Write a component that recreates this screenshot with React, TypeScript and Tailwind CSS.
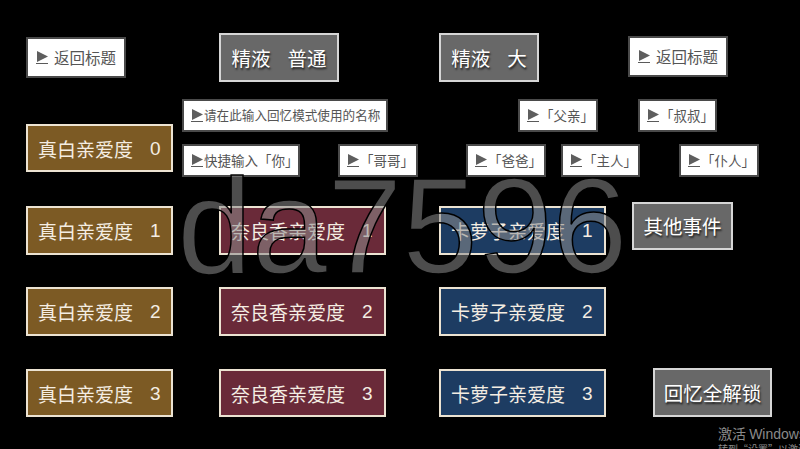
import React from 'react'

const cjk = "font-['Microsoft_YaHei','Noto_Sans_CJK_SC',sans-serif]"

function Tri()
{
  return (
    <span className="inline-flex items-end border-b-[1.5px] border-[#5a5a5a] pb-[1px] mr-[1px] shrink-0">
      <svg width="12" height="11" viewBox="0 0 12 11">
        <path d="M1 0 L12 5.5 L1 11 Z" fill="#5e5e5e" />
      </svg>
    </span>
  )
}

function LinkBtn({ label, w, big = false, gap = 0, size, cls = '' }: { label: string; w: number; big?: boolean; gap?: number; size?: number; cls?: string })
{
  return (
    <div
      className={`${cls} flex items-center whitespace-nowrap bg-white border-2 border-[#4a4a4a] text-[#555] leading-none ${big ? 'h-[41px] pl-[8px] text-[15.5px]' : 'h-[33px] pl-[7px] text-[13.5px]'}`}
      style={{ width: w }}
    >
      <Tri />
      <span style={{ marginLeft: gap, fontSize: size }}>{label}</span>
    </div>
  )
}

function LoveBtn({ label, n, w, color, cls = '' }: { label: string; n: number; w: number; color: string; cls?: string })
{
  return (
    <div
      className={`${cls} ${color} h-[49px] flex items-center gap-[17px] pl-[10px] border-2 border-[#ece3d2] text-[19px] text-[#f4ede2] leading-none`}
      style={{ width: w }}
    >
      <span>{label}</span>
      <span className="font-['Liberation_Sans',sans-serif] text-[19px]">{n}</span>
    </div>
  )
}

function GrayBtn({ children, w, h = 49, cls = '' }: { children: React.ReactNode; w: number; h?: number; cls?: string })
{
  return (
    <div
      className={`${cls} flex items-center justify-center bg-[#686868] border-2 border-[#d6d6d6] text-white text-[19.5px] leading-none [text-shadow:1px_2px_2px_rgba(0,0,0,0.7)]`}
      style={{ width: w, height: h }}
    >
      {children}
    </div>
  )
}

const brown = 'bg-[#7c5a24]'
const wine = 'bg-[#6a2a39]'
const navy = 'bg-[#1d3c62]'

export default function App()
{
  return (
    <main className={`${cjk} relative w-[800px] h-[449px] overflow-hidden bg-black`}>

      <div className="flex items-start pt-[33px]">
        <LinkBtn big label="返回标题" w={100} gap={5} cls="ml-[26px] mt-[4px]" />
        <GrayBtn w={120} cls="ml-[93px]">
          <span>精液</span>
          <span className="ml-[17px]">普通</span>
        </GrayBtn>
        <GrayBtn w={100} cls="ml-[100px]">
          <span>精液</span>
          <span className="ml-[17px]">大</span>
        </GrayBtn>
        <LinkBtn big label="返回标题" w={100} gap={5} cls="ml-[89px] mt-[3px]" />
      </div>

      <div className="flex items-start mt-[17px]">
        <div className="w-[182px] shrink-0 pt-[25px]">
          <LoveBtn label="真白亲爱度" n={0} w={147} color={brown} cls="ml-[26px] !h-[48px]" />
        </div>
        <div className="flex flex-col gap-[12px]">
          <div className="flex">
            <LinkBtn label="请在此输入回忆模式使用的名称" w={206} size={12.6} />
            <LinkBtn label="「父亲」" w={80} cls="ml-[130px]" />
            <LinkBtn label="「叔叔」" w={79} cls="ml-[40px]" />
          </div>
          <div className="flex">
            <LinkBtn label="快捷输入「你」" w={118} />
            <LinkBtn label="「哥哥」" w={80} cls="ml-[38px]" />
            <LinkBtn label="「爸爸」" w={80} cls="ml-[48px]" />
            <LinkBtn label="「主人」" w={79} cls="ml-[15px]" />
            <LinkBtn label="「仆人」" w={80} cls="ml-[39px]" />
          </div>
        </div>
      </div>

      <div className="flex items-start mt-[25px]">
        <LoveBtn label="真白亲爱度" n={1} w={147} color={brown} cls="ml-[26px] mt-[4px]" />
        <LoveBtn label="奈良香亲爱度" n={1} w={167} color={wine} cls="ml-[46px] mt-[4px]" />
        <LoveBtn label="卡萝子亲爱度" n={1} w={167} color={navy} cls="ml-[53px] mt-[4px]" />
        <GrayBtn w={101} h={48} cls="ml-[26px]">其他事件</GrayBtn>
      </div>

      <div className="flex items-start mt-[32px]">
        <LoveBtn label="真白亲爱度" n={2} w={147} color={brown} cls="ml-[26px]" />
        <LoveBtn label="奈良香亲爱度" n={2} w={167} color={wine} cls="ml-[46px]" />
        <LoveBtn label="卡萝子亲爱度" n={2} w={167} color={navy} cls="ml-[53px]" />
      </div>

      <div className="flex items-start mt-[32px]">
        <LoveBtn label="真白亲爱度" n={3} w={147} color={brown} cls="ml-[26px] mt-[1px] !h-[48px]" />
        <LoveBtn label="奈良香亲爱度" n={3} w={167} color={wine} cls="ml-[46px] mt-[1px] !h-[48px]" />
        <LoveBtn label="卡萝子亲爱度" n={3} w={167} color={navy} cls="ml-[53px] mt-[1px] !h-[48px]" />
        <GrayBtn w={119} cls="ml-[47px]">回忆全解锁</GrayBtn>
      </div>

      <div className="pointer-events-none absolute left-[177px] top-[159px] font-['Liberation_Sans',Arial,sans-serif] text-[135px] leading-none text-[rgba(140,140,140,0.55)] [-webkit-text-stroke:1.5px_#000]">
        da7596
      </div>

      <div className="pointer-events-none absolute left-[718px] top-[426px] text-[#8a8a8a] leading-none whitespace-nowrap">
        <div className="text-[14px] font-['Noto_Sans_CJK_SC',sans-serif]">激活 <span className="font-['Liberation_Sans',sans-serif]">Windows</span></div>
        <div className="mt-[3px] text-[10px]">转到“设置”以激活 Windows。</div>
      </div>

    </main>
  )
}
